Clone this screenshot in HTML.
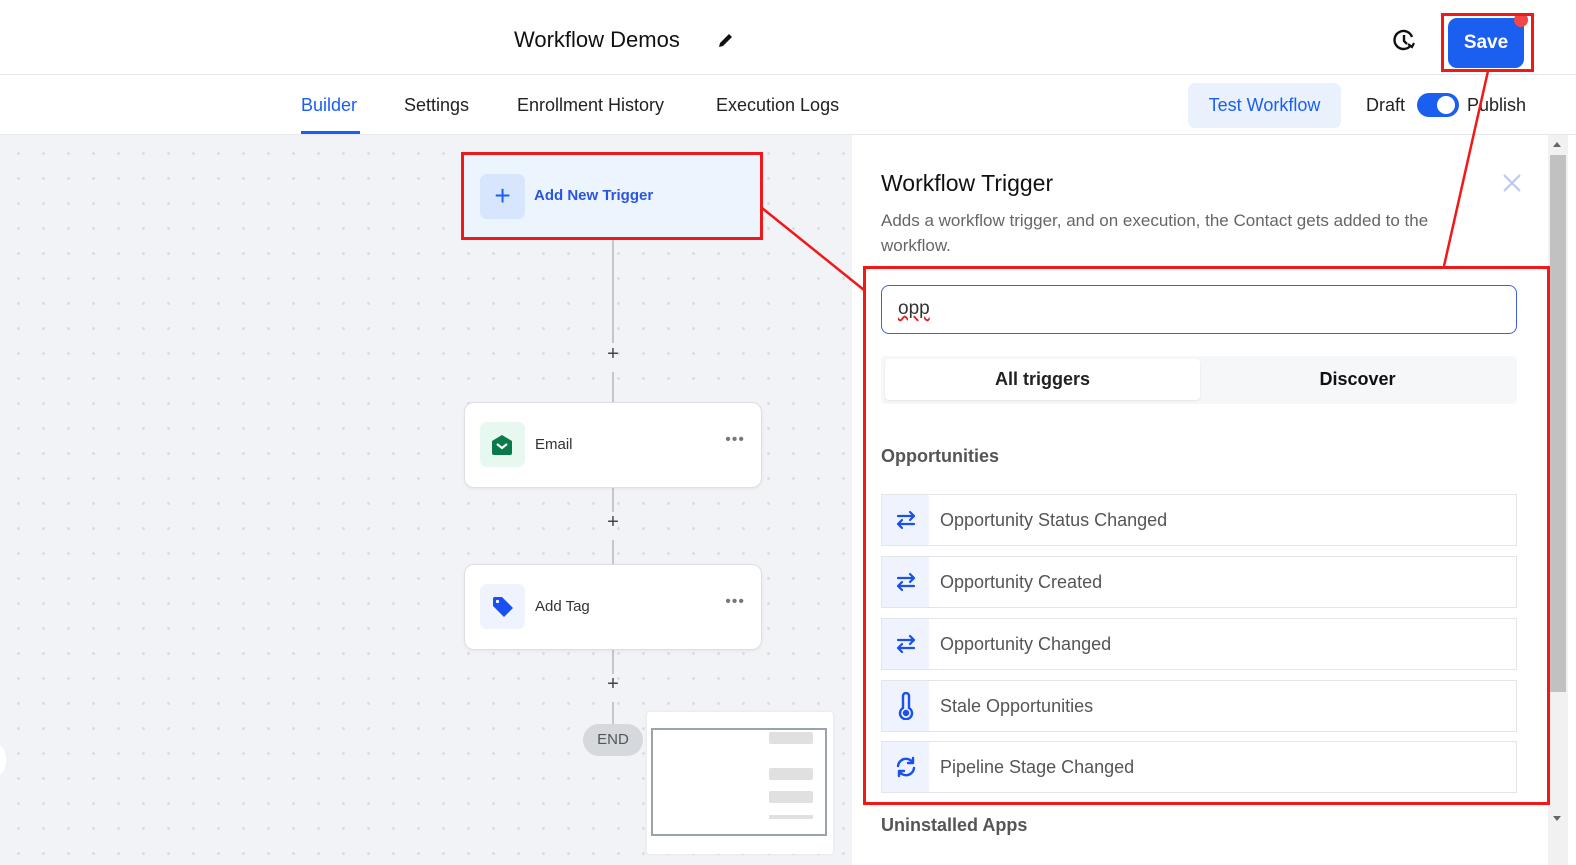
<!DOCTYPE html>
<html><head><meta charset="utf-8"><style>
*{box-sizing:border-box;margin:0;padding:0}
body{width:1576px;height:865px;overflow:hidden;font-family:"Liberation Sans",sans-serif;background:#fff;position:relative;color:#111}
.abs{position:absolute}
.canvas{left:0;top:135px;width:852px;height:730px;background-color:#f2f3f6;background-image:radial-gradient(circle,#d9dce2 1.3px,transparent 1.6px);background-size:25px 25px;background-position:6px 6px}
.node{position:absolute;left:464px;width:298px;height:86px;background:#fff;border:1px solid #dcdfe5;border-radius:10px;box-shadow:0 1px 3px rgba(0,0,0,.06)}
.node .ic{position:absolute;left:15px;top:19px;width:45px;height:45px;border-radius:7px}
.node .t{position:absolute;left:70px;top:33px;font-size:15px;color:#333}
.node .d{position:absolute;right:16px;top:28px;font-size:16px;color:#777;letter-spacing:1px}
.vl{position:absolute;left:612px;width:2px;background:#c4c6ca}
.plus{position:absolute;left:604px;font-size:20px;color:#444;width:18px;text-align:center}
.item{position:absolute;left:881px;width:636px;height:52px;border:1px solid #e3e5ea;background:#fff}
.item .ib{position:absolute;left:0;top:0;width:47px;height:50px;background:#eef3fd;display:flex;align-items:center;justify-content:center}
.item .tx{position:absolute;left:58px;top:15px;font-size:18px;color:#555}
.red{position:absolute;border:3px solid #f01818}
</style></head><body>
<!-- header -->
<div class="abs" style="left:0;top:0;width:1576px;height:75px;border-bottom:1px solid #e6e8ec"></div>
<div class="abs" style="left:514px;top:27px;font-size:22px;color:#111">Workflow Demos</div>
<svg class="abs" style="left:717px;top:31px" width="18" height="18" viewBox="0 0 18 18"><path d="M2 16 L3 12 L12 3 L15 6 L6 15 Z" fill="#111"/></svg>
<svg class="abs" style="left:1391px;top:28px" width="26" height="26" viewBox="0 0 26 26"><path d="M20 17 A9 9 0 1 1 21 9" fill="none" stroke="#111" stroke-width="2.4"/><path d="M13 7 V13 L16 16" fill="none" stroke="#111" stroke-width="2.4"/><path d="M17 16 L21 19 L23 15" fill="none" stroke="#111" stroke-width="2.2"/></svg>
<div class="abs" style="left:1448px;top:18px;width:76px;height:50px;background:#1a5ff0;border-radius:9px;color:#fff;font-size:19px;font-weight:bold;text-align:center;line-height:50px">Save</div>
<div class="abs" style="left:1514px;top:13px;width:14px;height:14px;border-radius:50%;background:#f04848"></div>
<!-- tabs -->
<div class="abs" style="left:0;top:134px;width:1576px;height:1px;background:#e6e8ec"></div>
<div class="abs" style="left:301px;top:95px;font-size:18px;color:#1a5ff0">Builder</div>
<div class="abs" style="left:301px;top:131px;width:59px;height:3px;background:#1a5ff0"></div>
<div class="abs" style="left:404px;top:95px;font-size:18px;color:#222">Settings</div>
<div class="abs" style="left:517px;top:95px;font-size:18px;color:#222">Enrollment History</div>
<div class="abs" style="left:716px;top:95px;font-size:18px;color:#222">Execution Logs</div>
<div class="abs" style="left:1188px;top:83px;width:153px;height:45px;background:#e9f1fd;border-radius:7px;color:#1a5ff0;font-size:18px;text-align:center;line-height:45px">Test Workflow</div>
<div class="abs" style="left:1366px;top:95px;font-size:18px;color:#222">Draft</div>
<div class="abs" style="left:1417px;top:93px;width:42px;height:24px;border-radius:12px;background:#1a5ff0"></div>
<div class="abs" style="left:1437px;top:96px;width:18px;height:18px;border-radius:50%;background:#fff"></div>
<div class="abs" style="left:1467px;top:95px;font-size:18px;color:#222">Publish</div>
<!-- canvas -->
<div class="abs canvas"></div>
<div class="abs" style="left:-10px;top:745px;width:16px;height:30px;border-radius:50%;background:#fff"></div>
<div class="vl" style="top:240px;height:103px"></div>
<div class="plus" style="top:343px">+</div>
<div class="vl" style="top:372px;height:30px"></div>
<div class="vl" style="top:488px;height:24px"></div>
<div class="plus" style="top:511px">+</div>
<div class="vl" style="top:540px;height:24px"></div>
<div class="vl" style="top:650px;height:24px"></div>
<div class="plus" style="top:673px">+</div>
<div class="vl" style="top:702px;height:24px"></div>
<div class="abs" style="left:464px;top:155px;width:297px;height:83px;background:#ecf4fe"></div>
<div class="abs" style="left:480px;top:174px;width:45px;height:45px;border-radius:7px;background:#d7e6fc;color:#1a5ff0;font-size:28px;text-align:center;line-height:43px">+</div>
<div class="abs" style="left:534px;top:187px;font-size:15px;color:#2a55e0;font-weight:bold">Add New Trigger</div>
<div class="node" style="top:402px"><div class="ic" style="background:#e6f8ef"><svg style="position:absolute;left:11px;top:12px" width="22" height="22" viewBox="0 0 22 22"><path d="M1 7 L11 1 L21 7 V19 Q21 21 19 21 H3 Q1 21 1 19 Z" fill="#0b7a4b"/><path d="M6 10 L11 14 L16 10" fill="none" stroke="#fff" stroke-width="2.2"/></svg></div><div class="t">Email</div><div class="d">•••</div></div>
<div class="node" style="top:564px"><div class="ic" style="background:#eef3fe"><svg style="position:absolute;left:11px;top:11px" width="24" height="24" viewBox="0 0 24 24"><path d="M2 4 Q2 2 4 2 H11 L22 13 L13 22 L2 11 Z" fill="#1a4ff0"/><circle cx="6.5" cy="6.5" r="1.6" fill="#fff"/></svg></div><div class="t">Add Tag</div><div class="d">•••</div></div>
<div class="abs" style="left:583px;top:724px;width:60px;height:32px;border-radius:16px;background:#d5d8dd;color:#555;font-size:15px;text-align:center;line-height:32px">END</div>
<div class="abs" style="left:647px;top:712px;width:186px;height:142px;background:#fff;border-radius:3px;box-shadow:0 0 3px rgba(0,0,0,.08)"></div>
<div class="abs" style="left:651px;top:728px;width:176px;height:108px;border:2px solid #9aa2b0"></div>
<div class="abs" style="left:769px;top:732px;width:44px;height:12px;background:#e0e0e0;border-radius:2px"></div>
<div class="abs" style="left:769px;top:768px;width:44px;height:12px;background:#e0e0e0;border-radius:2px"></div>
<div class="abs" style="left:769px;top:791px;width:44px;height:12px;background:#e0e0e0;border-radius:2px"></div>
<div class="abs" style="left:769px;top:815px;width:44px;height:4px;background:#e0e0e0"></div>
<!-- panel -->
<div class="abs" style="left:852px;top:135px;width:696px;height:730px;background:#fff"></div>
<div class="abs" style="left:881px;top:170px;font-size:23px;color:#111">Workflow Trigger</div>
<svg class="abs" style="left:1502px;top:173px" width="20" height="20" viewBox="0 0 20 20"><path d="M2 2 L18 18 M18 2 L2 18" stroke="#b9c8f5" stroke-width="2"/></svg>
<div class="abs" style="left:881px;top:208px;width:620px;font-size:17px;line-height:25px;color:#666">Adds a workflow trigger, and on execution, the Contact gets added to the workflow.</div>
<div class="abs" style="left:881px;top:285px;width:636px;height:49px;border:1.5px solid #3f5fe0;border-radius:8px"></div>
<div class="abs" style="left:898px;top:298px;font-size:19px;color:#333;text-decoration:underline wavy #e02020">opp</div>
<div class="abs" style="left:881px;top:356px;width:636px;height:48px;background:#f6f7f9;border-radius:4px"></div>
<div class="abs" style="left:885px;top:359px;width:315px;height:41px;background:#fff;border-radius:4px;box-shadow:0 1px 2px rgba(0,0,0,.08);text-align:center;line-height:41px;font-size:18px;font-weight:bold;color:#222">All triggers</div>
<div class="abs" style="left:1200px;top:359px;width:315px;height:41px;text-align:center;line-height:41px;font-size:18px;font-weight:bold;color:#111">Discover</div>
<div class="abs" style="left:881px;top:446px;font-size:18px;font-weight:bold;color:#555">Opportunities</div>
<div class="item" style="top:494px"><div class="ib"><svg width="24" height="24" viewBox="0 0 24 24" fill="none" stroke="#1a4ff0" stroke-width="2.2" stroke-linecap="round" stroke-linejoin="round"><path d="M4 8 H20 M16 4 L20 8 L16 12 M20 16 H4 M8 12 L4 16 L8 20"/></svg></div><div class="tx">Opportunity Status Changed</div></div>
<div class="item" style="top:556px"><div class="ib"><svg width="24" height="24" viewBox="0 0 24 24" fill="none" stroke="#1a4ff0" stroke-width="2.2" stroke-linecap="round" stroke-linejoin="round"><path d="M4 8 H20 M16 4 L20 8 L16 12 M20 16 H4 M8 12 L4 16 L8 20"/></svg></div><div class="tx">Opportunity Created</div></div>
<div class="item" style="top:618px"><div class="ib"><svg width="24" height="24" viewBox="0 0 24 24" fill="none" stroke="#1a4ff0" stroke-width="2.2" stroke-linecap="round" stroke-linejoin="round"><path d="M4 8 H20 M16 4 L20 8 L16 12 M20 16 H4 M8 12 L4 16 L8 20"/></svg></div><div class="tx">Opportunity Changed</div></div>
<div class="item" style="top:680px"><div class="ib"><svg width="24" height="28" viewBox="0 0 24 28" fill="none" stroke="#1a4ff0" stroke-width="2.4"><path d="M9 16 V4 A3 3 0 0 1 15 4 V16 A6 6 0 1 1 9 16 Z"/><circle cx="12" cy="21" r="2" fill="#1a4ff0"/></svg></div><div class="tx">Stale Opportunities</div></div>
<div class="item" style="top:741px"><div class="ib"><svg width="24" height="24" viewBox="0 0 24 24" fill="none" stroke="#1a4ff0" stroke-width="2.4" stroke-linecap="round" stroke-linejoin="round"><path d="M4 11 A8 8 0 0 1 19 8 M20 13 A8 8 0 0 1 5 16 M19 3 V8 H14 M5 21 V16 H10"/></svg></div><div class="tx">Pipeline Stage Changed</div></div>
<div class="abs" style="left:881px;top:815px;font-size:18px;font-weight:bold;color:#555">Uninstalled Apps</div>
<!-- scrollbar -->
<div class="abs" style="left:1548px;top:135px;width:20px;height:730px;background:#f1f1f1"></div>
<div class="abs" style="left:1550px;top:155px;width:16px;height:537px;background:#c1c1c1"></div>
<div class="abs" style="left:1553px;top:142px;width:0;height:0;border-left:4px solid transparent;border-right:4px solid transparent;border-bottom:5px solid #666"></div>
<div class="abs" style="left:1553px;top:816px;width:0;height:0;border-left:4px solid transparent;border-right:4px solid transparent;border-top:5px solid #666"></div>
<!-- annotations -->
<div class="red" style="left:1441px;top:13px;width:93px;height:59px"></div>
<div class="red" style="left:461px;top:152px;width:302px;height:88px"></div>
<div class="red" style="left:863px;top:266px;width:687px;height:539px"></div>
<svg class="abs" style="left:0;top:0" width="1576" height="865"><path d="M762 208 L864 290 M1488 71 L1444 266" stroke="#f01818" stroke-width="2.5"/></svg>
</body></html>
